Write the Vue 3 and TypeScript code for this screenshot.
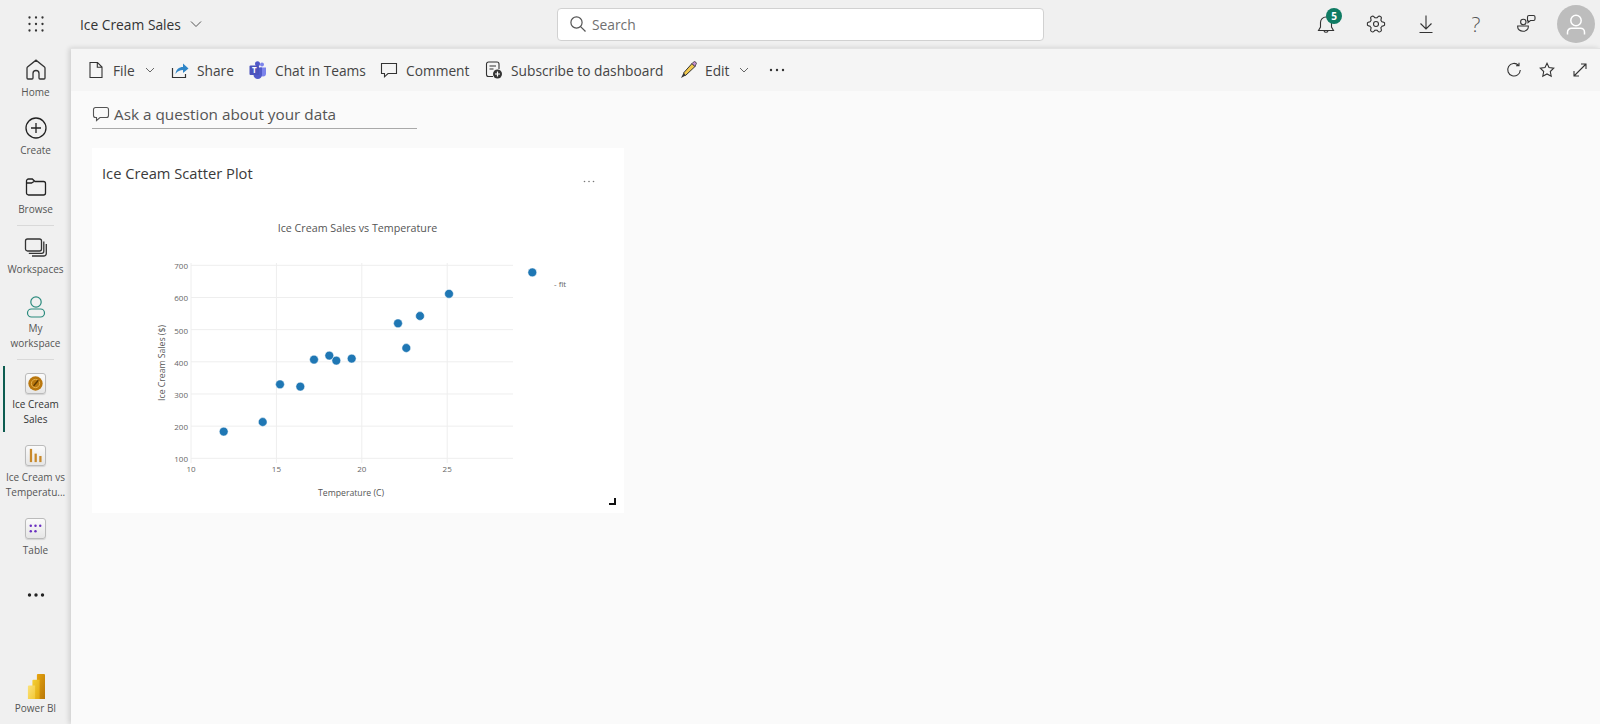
<script setup lang="ts">
interface Pt { x: number; y: number }

const yTicks: number[] = [700, 600, 500, 400, 300, 200, 100]
const xTicks: number[] = [10, 15, 20, 25]
const points: Pt[] = [
  { x: 223.7, y: 431.6 }, { x: 262.7, y: 422 }, { x: 280, y: 384.3 }, { x: 300.3, y: 386.6 },
  { x: 314, y: 359.6 }, { x: 329.3, y: 355.6 }, { x: 336.3, y: 360.6 }, { x: 351.7, y: 358.6 },
  { x: 398, y: 323.3 }, { x: 406.3, y: 348 }, { x: 420, y: 316 }, { x: 449, y: 293.8 }, { x: 532.3, y: 272.4 }
]
const tickY = (v: number): number => 458.3 - ((v - 100) / 600) * 193
const tickX = (v: number): number => 191 + ((v - 10) / 5) * 85.4

function gearPath(): string {
  const parts: string[] = []
  for (let i = 0; i <= 96; i++) {
    const a = (i / 96) * Math.PI * 2
    const r = 7.4 + 1.2 * Math.max(-0.6, Math.min(0.6, Math.cos(a * 6))) / 0.6
    parts.push(`${i ? 'L' : 'M'}${(12 + r * Math.cos(a)).toFixed(2)} ${(12 + r * Math.sin(a)).toFixed(2)}`)
  }
  return parts.join('') + 'Z'
}
const gear = gearPath()
</script>

<template>
  <div class="page">
    <header class="topbar">
      <div class="top-left">
        <svg class="waffle" width="16" height="16" viewBox="0 0 16 16">
          <g fill="#333">
            <circle v-for="c in 9" :key="c" :cx="1.5 + ((c - 1) % 3) * 6.5" :cy="1.5 + Math.floor((c - 1) / 3) * 6.5" r="1.15" />
          </g>
        </svg>
        <span class="app-title">Ice Cream Sales</span>
        <svg width="12" height="8" viewBox="0 0 12 8"><path d="M1 1.5 6 6.5 11 1.5" fill="none" stroke="#555" stroke-width="1" /></svg>
      </div>
      <div class="search">
        <svg width="18" height="18" viewBox="0 0 18 18"><circle cx="7.5" cy="7.5" r="5.6" fill="none" stroke="#555" stroke-width="1.2" /><path d="M11.6 11.6 16.5 16.5" stroke="#555" stroke-width="1.2" /></svg>
        <span>Search</span>
      </div>
      <div class="top-right">
        <div class="t-ic bell-wrap">
          <svg width="24" height="24" viewBox="0 0 24 24" fill="none" stroke="#333" stroke-width="1.1"><path d="M4.5 18.5 6.5 15V10.5a5.5 5.5 0 0 1 11 0V15l2 3.5ZM10 18.8a2.1 2.1 0 0 0 4 0" /></svg>
          <span class="badge">5</span>
        </div>
        <div class="t-ic"><svg width="24" height="24" viewBox="0 0 24 24" fill="none" stroke="#333" stroke-width="1.1"><path :d="gear" /><circle cx="12" cy="12" r="2.5" /></svg></div>
        <div class="t-ic"><svg width="24" height="24" viewBox="0 0 24 24" fill="none" stroke="#333" stroke-width="1.1"><path d="M12 3.5V17M6.5 11.5 12 17l5.5-5.5M5.5 20.5h13" /></svg></div>
        <div class="t-ic help">?</div>
        <div class="t-ic"><svg width="24" height="24" viewBox="0 0 24 24" fill="none" stroke="#333" stroke-width="1.1"><circle cx="9.300" cy="10" r="2.700" /><path d="M3.700 14h10.600v1a5.300 4.300 0 0 1-10.600 0ZM14 10.500V8.500h-.5V5a1.500 1.500 0 0 1 1.500-1.500h4.500A1.500 1.500 0 0 1 21 5v2a1.500 1.500 0 0 1-1.500 1.500h-3Z" /></svg></div>
        <div class="avatar"><svg width="24" height="24" viewBox="0 0 24 24" fill="none" stroke="#fff" stroke-width="1.5"><circle cx="12" cy="8.5" r="5.2" /><path d="M3.5 22.5v-2.3a4 4 0 0 1 4-4h9a4 4 0 0 1 4 4v2.3" /></svg></div>
      </div>
    </header>

    <div class="body">
      <nav class="nav">
        <div class="nav-item home">
          <svg width="24" height="24" viewBox="0 0 24 24" fill="none" stroke="#333" stroke-width="1.3"><path d="M3 20V10.200a1.500 1.500 0 0 1 .5-1.100L12 2.200l8.500 6.900a1.500 1.500 0 0 1 .5 1.100V20a1 1 0 0 1-1 1h-4a1 1 0 0 1-1-1v-4.500a3 3 0 0 0-6 0V20a1 1 0 0 1-1 1H4a1 1 0 0 1-1-1Z" /></svg>
          <span>Home</span>
        </div>
        <div class="nav-item g16">
          <svg width="24" height="24" viewBox="0 0 24 24" fill="none" stroke="#222" stroke-width="1.3"><circle cx="12" cy="12" r="10" /><path d="M12 7v10M7 12h10" /></svg>
          <span>Create</span>
        </div>
        <div class="nav-item g17">
          <svg width="24" height="24" viewBox="0 0 24 24" fill="none" stroke="#222" stroke-width="1.3"><path d="M2.500 6a2 2 0 0 1 2-2h3.800l2.700 2.500h8.500a2 2 0 0 1 2 2V18a2 2 0 0 1-2 2h-15a2 2 0 0 1-2-2Z" /><path d="M2.500 8h5l2.500-1.500" /></svg>
          <span>Browse</span>
        </div>
        <div class="divider first"></div>
        <div class="nav-item g9">
          <svg width="24" height="24" viewBox="0 0 24 24" fill="none" stroke="#333"><rect x="1.500" y="4" width="16" height="12" rx="2" stroke-width="1.300" /><path d="M19.800 6.500v9.800a2 2 0 0 1-2 2H4.800M22.300 9v9.500a2.500 2.500 0 0 1-2.500 2.500H8" stroke-width="1.300" /></svg>
          <span>Workspaces</span>
        </div>
        <div class="nav-item g17">
          <svg width="24" height="24" viewBox="0 0 24 24" fill="none" stroke="#2a8a7d" stroke-width="1.200"><circle cx="12" cy="8" r="5.200" /><rect x="3.500" y="15" width="17" height="8" rx="4" /></svg>
          <span>My<br />workspace</span>
        </div>
        <div class="divider second"></div>
        <div class="nav-item active">
          <div class="tile">
            <svg width="17" height="17" viewBox="0 0 18 18"><circle cx="9" cy="9" r="7.600" fill="#b9770e" /><circle cx="9" cy="9" r="4.400" fill="none" stroke="#e8b550" stroke-width="1" /><path d="M7 11.500 12 5.500" stroke="#5c3900" stroke-width="1.600" /></svg>
          </div>
          <span class="dark">Ice Cream<br />Sales</span>
        </div>
        <div class="nav-item g11">
          <div class="tile">
            <svg width="17" height="17" viewBox="0 0 18 18" fill="#c8892a"><rect x="3" y="2" width="2.400" height="14" /><rect x="8" y="7" width="2.400" height="9" /><rect x="13" y="9.500" width="2.400" height="6.500" /></svg>
          </div>
          <span>Ice Cream vs<br />Temperatu...</span>
        </div>
        <div class="nav-item g16">
          <div class="tile">
            <svg width="17" height="17" viewBox="0 0 18 18" fill="#6a2fc0"><circle cx="4" cy="6" r="1.300" /><circle cx="9" cy="6" r="1.300" /><circle cx="14" cy="6" r="1.300" /><circle cx="4" cy="12" r="1.300" /><circle cx="9" cy="12" r="1.300" /></svg>
          </div>
          <span>Table</span>
        </div>
        <div class="more">
          <svg width="18" height="4" viewBox="0 0 18 4" fill="#222"><circle cx="2.500" cy="2" r="1.700" /><circle cx="9" cy="2" r="1.700" /><circle cx="15.500" cy="2" r="1.700" /></svg>
        </div>
        <div class="nav-item pbi">
          <svg width="18" height="25" viewBox="0 0 20 26" preserveAspectRatio="none">
            <defs>
              <linearGradient id="pbiA" x1="0" y1="0" x2="1" y2="1"><stop offset="0" stop-color="#e8a60f" /><stop offset="1" stop-color="#b87708" /></linearGradient>
              <linearGradient id="pbiB" x1="0" y1="0" x2="1" y2="1"><stop offset="0" stop-color="#f5d034" /><stop offset="1" stop-color="#e0a812" /></linearGradient>
              <linearGradient id="pbiC" x1="0" y1="0" x2="1" y2="1"><stop offset="0" stop-color="#fce27a" /><stop offset="1" stop-color="#f2c937" /></linearGradient>
            </defs>
            <path d="M11 1a1 1 0 0 1 1-1h7a1 1 0 0 1 1 1v25h-9Z" fill="url(#pbiA)" />
            <path d="M6 7a1 1 0 0 1 1-1h7v20H6Z" fill="url(#pbiB)" />
            <path d="M1 13a1 1 0 0 1 1-1h7v14H1Z" fill="url(#pbiC)" />
          </svg>
          <span>Power BI</span>
        </div>
      </nav>

      <main class="main">
        <div class="actions">
          <div class="act-list">
            <div class="act">
              <svg width="18" height="18" viewBox="0 0 18 18" fill="none" stroke="#333" stroke-width="1.100"><path d="M3 1.500h7.500L15 6v10.500H3ZM10.300 1.700V6.200H15" /></svg>
              <span>File</span>
              <svg class="chev" width="10" height="6" viewBox="0 0 10 6"><path d="M1 1 5 5 9 1" fill="none" stroke="#666" /></svg>
            </div>
            <div class="act">
              <svg width="18" height="18" viewBox="0 0 18 18" fill="none"><path d="M1.500 7v9.500h13V13" stroke="#333" stroke-width="1.200" /><path d="M4.500 13c.5-4.500 3.500-7 7.500-7V2.500L17.500 7.500 12 12V9c-3 0-5.500 1-7.500 4Z" fill="#2f86c8" /></svg>
              <span>Share</span>
            </div>
            <div class="act">
              <svg width="18" height="18" viewBox="0 0 18 18">
                <circle cx="13" cy="3.600" r="2" fill="#7b83eb" /><circle cx="8.500" cy="2.800" r="2.500" fill="#5059c9" />
                <path d="M11 6.500h6v6a3 3 0 0 1-6 0Z" fill="#7b83eb" /><path d="M4.500 6.500h8.500v7.200a4.200 4.200 0 0 1-8.500 0Z" fill="#5059c9" />
                <rect x="0.500" y="4.500" width="9.500" height="9.500" rx="1" fill="#4b53bc" />
                <text x="5.250" y="12" class="teams-t" text-anchor="middle">T</text>
              </svg>
              <span>Chat in Teams</span>
            </div>
            <div class="act">
              <svg width="18" height="18" viewBox="0 0 18 18" fill="none" stroke="#333" stroke-width="1.100"><path d="M1.500 2.500h15v10H8L4.500 15.800V12.500h-3Z" /></svg>
              <span>Comment</span>
            </div>
            <div class="act">
              <svg width="18" height="18" viewBox="0 0 18 18" fill="none" stroke="#333" stroke-width="1.100"><path d="M8 15.500H3.500a2 2 0 0 1-2-2V3a2 2 0 0 1 2-2H12a2 2 0 0 1 2 2v5" /><path d="M4.500 5h6.500M4.500 8h4" /><circle cx="12.500" cy="13" r="4.500" fill="#333" stroke="none" /><path d="M12.500 10.500v5M10 13h5" stroke="#fff" stroke-width="1.200" /></svg>
              <span>Subscribe to dashboard</span>
            </div>
            <div class="act">
              <svg width="18" height="18" viewBox="0 0 18 18"><path d="M4.500 12 13 2.500 16 5.500 6.500 14.500Z" fill="#f2c94c" stroke="#333" stroke-width="1" /><path d="M13 2.500 14.300 1.200a1.500 1.500 0 0 1 2.500 2.500L16 5.500Z" fill="#c78fd0" stroke="#333" stroke-width=".8" /><path d="M4.500 12 2 17 6.500 14.500Z" fill="#333" /></svg>
              <span>Edit</span>
              <svg class="chev" width="10" height="6" viewBox="0 0 10 6"><path d="M1 1 5 5 9 1" fill="none" stroke="#666" /></svg>
            </div>
            <div class="act">
              <svg width="16" height="4" viewBox="0 0 16 4" fill="#333"><circle cx="2" cy="2" r="1.200" /><circle cx="8" cy="2" r="1.200" /><circle cx="14" cy="2" r="1.200" /></svg>
            </div>
          </div>
          <div class="act-right">
            <svg width="16" height="16" viewBox="0 0 16 16" fill="none" stroke="#333" stroke-width="1.100"><path d="M12.500 3.300A6.300 6.300 0 1 0 14.300 8M13 .8v3h-3" /></svg>
            <svg width="16" height="16" viewBox="0 0 16 16" fill="none" stroke="#333" stroke-width="1.100"><path d="m8 1.300 2 4.300 4.700.6-3.400 3.300.9 4.700L8 11.900 3.800 14.200l.9-4.700L1.300 6.200 6 5.600Z" /></svg>
            <svg width="16" height="16" viewBox="0 0 16 16" fill="none" stroke="#333" stroke-width="1.100"><path d="M2 14 14 2M9 2h5v5M2 9v5h5" /></svg>
          </div>
        </div>

        <div class="content">
          <div class="qa">
            <svg width="18" height="18" viewBox="0 0 18 18" fill="none" stroke="#555" stroke-width="1.100"><path d="M3.500 2.500h11a2 2 0 0 1 2 2v6a2 2 0 0 1-2 2H8l-3.500 3v-3h-1a2 2 0 0 1-2-2v-6a2 2 0 0 1 2-2Z" /></svg>
            <span>Ask a question about your data</span>
          </div>

          <section class="card">
            <div class="card-head">
              <span class="card-title">Ice Cream Scatter Plot</span>
              <svg class="card-more" width="12" height="3" viewBox="0 0 12 3" fill="#777"><circle cx="1.500" cy="1.500" r=".8" /><circle cx="6" cy="1.500" r=".8" /><circle cx="10.500" cy="1.500" r=".8" /></svg>
            </div>
            <svg class="chart" width="532" height="317" viewBox="92 196 532 317">
              <text x="357.500" y="232" class="c-title" text-anchor="middle">Ice Cream Sales vs Temperature</text>
              <g stroke="#eeeeee" stroke-width="1">
                <line v-for="v in yTicks" :key="'h' + v" x1="191" x2="513" :y1="tickY(v)" :y2="tickY(v)" />
                <line v-for="v in xTicks" :key="'v' + v" :x1="tickX(v)" :x2="tickX(v)" y1="263" y2="463" />
              </g>
              <text v-for="v in yTicks" :key="'yl' + v" x="188" :y="tickY(v) + 4" class="tick" text-anchor="end">{{ v }}</text>
              <text v-for="v in xTicks" :key="'xl' + v" :x="tickX(v)" y="472" class="tick" text-anchor="middle">{{ v }}</text>
              <text x="0" y="0" class="axis" text-anchor="middle" transform="translate(165 363) rotate(-90)">Ice Cream Sales ($)</text>
              <text x="351" y="496" class="axis" text-anchor="middle">Temperature (C)</text>
              <text x="554" y="287" class="tick">- fit</text>
              <circle v-for="(p, i) in points" :key="i" :cx="p.x" :cy="p.y" r="4.400" fill="#1f77b4" stroke="#fff" stroke-width=".5" />
            </svg>
            <svg class="resize" width="7" height="7" viewBox="0 0 7 7"><path d="M0 6h6V0" fill="none" stroke="#111" stroke-width="2" /></svg>
          </section>
        </div>
      </main>
    </div>
  </div>
</template>

<style scoped>
.page {
  width: 1600px;
  height: 724px;
  overflow: hidden;
  display: flex;
  flex-direction: column;
  background: #f0f0f0;
  color: #333;
  font-family: "Open Sans", "Noto Sans", sans-serif;
}
.topbar {
  height: 48px;
  flex: none;
  display: grid;
  grid-template-columns: 557px 487px 1fr;
  align-items: center;
}
.top-left {
  display: flex;
  align-items: center;
  padding-left: 28px;
}
.waffle { margin-right: 36px; }
.app-title { font-size: 13.800px; color: #333; margin-right: 9px; }
.search {
  height: 33px;
  box-sizing: border-box;
  background: #fff;
  border: 1px solid #d1d1d1;
  border-radius: 4px;
  display: flex;
  align-items: center;
  padding-left: 11px;
  gap: 5px;
  font-size: 13.800px;
  color: #707070;
}
.top-right {
  display: flex;
  align-items: center;
  padding-left: 257px;
}
.t-ic {
  width: 50px;
  height: 30px;
  display: flex;
  align-items: center;
  justify-content: center;
  position: relative;
}
.help { font-size: 21px; color: #555; font-weight: 300; }
.badge {
  position: absolute;
  left: 25px;
  top: -1px;
  width: 16px;
  height: 16px;
  border-radius: 50%;
  background: #0f7b63;
  color: #fff;
  font-size: 10px;
  font-weight: 700;
  display: flex;
  align-items: center;
  justify-content: center;
}
.avatar {
  width: 38px;
  height: 38px;
  border-radius: 50%;
  background: #bdbdbd;
  display: flex;
  align-items: center;
  justify-content: center;
  margin-left: 6px;
  overflow: hidden;
}
.body { flex: 1; display: flex; min-height: 0; }
.nav {
  width: 71px;
  flex: none;
  display: flex;
  flex-direction: column;
  align-items: center;
  padding-top: 10px;
  font-size: 10px;
  color: #555;
  position: relative;
}
.nav-item {
  width: 100%;
  display: flex;
  flex-direction: column;
  align-items: center;
  gap: 3px;
  text-align: center;
  line-height: 15px;
  color: #555;
}
.nav-item .dark { color: #333; }
.g9 { margin-top: 9px; }
.g11 { margin-top: 11px; }
.g16 { margin-top: 16px; }
.g17 { margin-top: 17px; }
.divider {
  width: 37px;
  height: 1px;
  background: #d9d9d9;
}
.divider.first { margin-top: 8px; }
.divider.second { margin-top: 8px; }
.active {
  margin-top: 6px;
  padding: 5px 0;
  gap: 2px;
  position: relative;
}
.active::before {
  content: "";
  position: absolute;
  left: 3px;
  top: 0;
  bottom: 0;
  width: 1.5px;
  background: #0d5c50;
}
.tile {
  width: 21px;
  height: 21px;
  margin: 1.500px 0;
  box-sizing: border-box;
  border: 1px solid #bbb;
  border-radius: 3px;
  background: linear-gradient(#fbfbfb, #e6e6e6);
  box-shadow: 0 1px 1px rgba(0, 0, 0, 0.12);
  display: flex;
  align-items: center;
  justify-content: center;
}
.more {
  margin-top: 35px;
  height: 4px;
  display: flex;
}
.pbi {
  margin-top: auto;
  padding-bottom: 8px;
  gap: 2px;
}
.main {
  flex: 1;
  min-width: 0;
  display: flex;
  flex-direction: column;
  background: #fafafa;
  border-top: 1px solid #e3e3e3;
  box-shadow: -2px 0 5px rgba(0, 0, 0, 0.14);
}
.actions {
  height: 42px;
  flex: none;
  background: #f5f5f5;
  display: flex;
  align-items: center;
  justify-content: space-between;
  font-size: 13.750px;
  color: #444;
}
.act-list {
  display: grid;
  grid-template-columns: 84px 78px 131px 105px 194px 90px 30px;
  padding-left: 16px;
  align-items: center;
}
.act {
  display: flex;
  align-items: center;
  gap: 8px;
}
.chev { margin-left: 2px; }
.teams-t { font-size: 8px; font-weight: 700; fill: #fff; }
.act-right {
  display: flex;
  gap: 17px;
  padding-right: 12px;
}
.content {
  flex: 1;
  padding: 11px 0 0 21px;
}
.qa {
  width: 325px;
  height: 24px;
  padding-bottom: 2px;
  border-bottom: 1px solid #a9a9a9;
  display: flex;
  align-items: center;
  gap: 4px;
  font-size: 15.300px;
  color: #555;
}
.card {
  width: 532px;
  height: 365px;
  margin-top: 19px;
  background: #fff;
  position: relative;
  display: flex;
  flex-direction: column;
}
.card-head {
  height: 48px;
  flex: none;
  display: flex;
  justify-content: space-between;
  padding: 14px 0 0 10px;
  box-sizing: border-box;
}
.card-title { font-size: 14.700px; line-height: 22px; color: #3a3a3a; }
.card-more { margin: 18px 29px 0 0; }
.chart { display: block; flex: none; }
.c-title { font-size: 10.700px; fill: #555; font-family: "Open Sans", sans-serif; }
.tick { font-size: 8px; fill: #666; font-family: "Open Sans", sans-serif; }
.axis { font-size: 8.700px; fill: #555; font-family: "Open Sans", sans-serif; }
.resize { position: absolute; right: 8px; bottom: 8px; }
</style>

<style>
html, body { margin: 0; padding: 0; background: #f0f0f0; }
</style>
